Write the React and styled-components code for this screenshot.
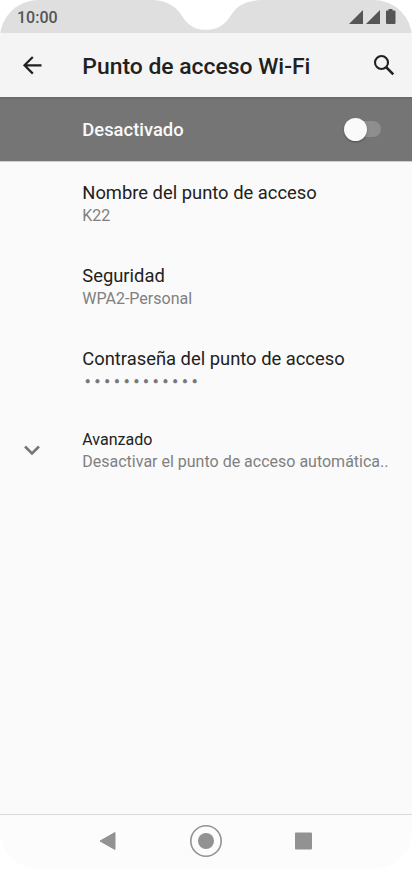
import React from 'react';
import styled, { createGlobalStyle } from 'styled-components';

const GlobalStyle = createGlobalStyle`
  * {
    box-sizing: border-box;
  }
  body {
    margin: 0;
    background: #fff;
    font-family: Roboto, 'Liberation Sans', sans-serif;
  }
`;

const Screen = styled.div`
  display: flex;
  flex-direction: column;
  width: 412px;
  height: 869px;
  overflow: hidden;
  border-radius: 38px;
  background: #fafafa;
`;

const StatusBar = styled.div`
  position: relative;
  display: flex;
  align-items: center;
  justify-content: space-between;
  height: 33px;
  padding: 1px 16px 0 17px;
  background: #dfdfdf;
`;

const Notch = styled.svg`
  position: absolute;
  top: 0;
  left: 152px;
`;

const Clock = styled.span`
  font-size: 16px;
  font-weight: 500;
  color: #555;
`;

const Header = styled.header`
  display: flex;
  align-items: center;
  height: 64px;
  background: #f4f4f4;
`;

const IconSlot = styled.div`
  display: flex;
  flex: none;
  width: 82.3px;
  padding-left: 20px;
`;

const Title = styled.h1`
  flex: 1;
  margin: 0;
  padding-top: 3px;
  font-size: 22.9px;
  font-weight: 500;
  line-height: 28px;
  white-space: nowrap;
  color: #212121;
`;

const SearchIcon = styled.svg`
  flex: none;
  margin-right: 14px;
`;

const SwitchBar = styled.div`
  display: flex;
  align-items: center;
  justify-content: space-between;
  height: 65px;
  padding: 0 31px 0 82.3px;
  border-bottom: 1px solid #cfcfcf;
  background: linear-gradient(#666 0, #757575 3px);
`;

const SwitchLabel = styled.span`
  font-size: 18.4px;
  font-weight: 500;
  color: #fafafa;
`;

const Track = styled.div`
  display: flex;
  align-items: center;
  width: 35px;
  height: 16px;
  border-radius: 8px;
  background: #8e8e8e;
`;

const Thumb = styled.div`
  flex: none;
  width: 23px;
  height: 23px;
  margin-left: -2px;
  border-radius: 50%;
  background: #fafafa;
  box-shadow: 0 1px 2px rgba(0, 0, 0, 0.35);
`;

const List = styled.main`
  flex: 1;
`;

const Row = styled.div`
  display: flex;
  align-items: center;
  height: ${({ $height }) => $height || 83}px;
`;

const RowText = styled.div`
  padding-top: ${({ $top }) => $top || 0}px;
  white-space: nowrap;
`;

const RowTitle = styled.div`
  font-size: ${({ $small }) => ($small ? 16 : 18.37)}px;
  line-height: ${({ $small }) => ($small ? 22 : 24)}px;
  color: #212121;
`;

const RowValue = styled.div`
  font-size: 16px;
  line-height: 22px;
  color: #808080;
`;

const Password = styled(RowValue)`
  padding-left: 2.7px;
  letter-spacing: 4.33px;
  color: #757575;
  -webkit-text-stroke: 0.7px #757575;
`;

const NavBar = styled.nav`
  display: flex;
  align-items: center;
  justify-content: space-between;
  height: 55px;
  padding: 0 99px 2px 98px;
  border-top: 1px solid #d9d9d9;
  background: #fcfcfc;
`;

const rows = [
  { title: 'Nombre del punto de acceso', value: 'K22' },
  { title: 'Seguridad', value: 'WPA2-Personal' },
  {
    title: 'Contraseña del punto de acceso',
    value: '••••••••••••',
    secret: true,
  },
];

function App() {
  return (
    <>
      <GlobalStyle />
      <Screen>
        <StatusBar>
          <Clock>10:00</Clock>
          <Notch width="110" height="31" viewBox="152 0 110 31">
            <path
              d="M154 0C166 1 174 5 180 13C186 22 191 29.8 206 29.8C221 29.8 226.500 22 232.500 13C238 5 246 1 260 0Z"
              fill="#fff"
            />
          </Notch>
          <svg width="47" height="16" viewBox="0 0 47 16" fill="#555">
            <path d="M0 15L14 1V15Z" />
            <path d="M17 15L31 1V15Z" />
            <path d="M37.500 1.500H39.500V0H43.500V1.500H45.500Q46.500 1.500 46.500 2.500V14Q46.500 15 45.500 15H38Q37 15 37 14V2Z" />
          </svg>
        </StatusBar>

        <Header>
          <IconSlot>
            <svg width="24" height="24" viewBox="0 0 24 24" fill="none">
              <path
                d="M21.500 12.300H4.500M12.800 4L4.500 12.300L12.800 20.600"
                stroke="#212121"
                strokeWidth="2.200"
              />
            </svg>
          </IconSlot>
          <Title>Punto de acceso Wi-Fi</Title>
          <SearchIcon width="28" height="28" viewBox="0 0 28 28" fill="none">
            <circle
              cx="11.500"
              cy="11.500"
              r="6.500"
              stroke="#212121"
              strokeWidth="2.100"
            />
            <path
              d="M16 16L23.300 23.300"
              stroke="#212121"
              strokeWidth="2.500"
            />
          </SearchIcon>
        </Header>

        <SwitchBar>
          <SwitchLabel>Desactivado</SwitchLabel>
          <Track>
            <Thumb />
          </Track>
        </SwitchBar>

        <List>
          {rows.map((row) => (
            <Row key={row.title}>
              <IconSlot />
              <RowText>
                <RowTitle>{row.title}</RowTitle>
                {row.secret ? (
                  <Password>{row.value}</Password>
                ) : (
                  <RowValue>{row.value}</RowValue>
                )}
              </RowText>
            </Row>
          ))}
          <Row $height={78}>
            <IconSlot>
              <svg width="24" height="24" viewBox="0 0 24 24" fill="none">
                <path
                  d="M5 8.500L12 15.500L19 8.500"
                  stroke="#757575"
                  strokeWidth="2.500"
                />
              </svg>
            </IconSlot>
            <RowText $top={2}>
              <RowTitle $small>Avanzado</RowTitle>
              <RowValue>Desactivar el punto de acceso automática..</RowValue>
            </RowText>
          </Row>
        </List>

        <NavBar>
          <svg width="19" height="20" viewBox="0 0 19 20">
            <path
              d="M2 10L17 1.500V18.500Z"
              fill="#929292"
              stroke="#929292"
              strokeLinejoin="round"
            />
          </svg>
          <svg width="34" height="34" viewBox="0 0 34 34">
            <circle
              cx="17"
              cy="17"
              r="15.200"
              fill="none"
              stroke="#929292"
              strokeWidth="1.600"
            />
            <circle cx="17" cy="17" r="8" fill="#929292" />
          </svg>
          <svg width="19" height="18" viewBox="0 0 19 18">
            <rect x="1" y="0.500" width="17" height="17" rx="1" fill="#929292" />
          </svg>
        </NavBar>
      </Screen>
    </>
  );
}

export default App;
